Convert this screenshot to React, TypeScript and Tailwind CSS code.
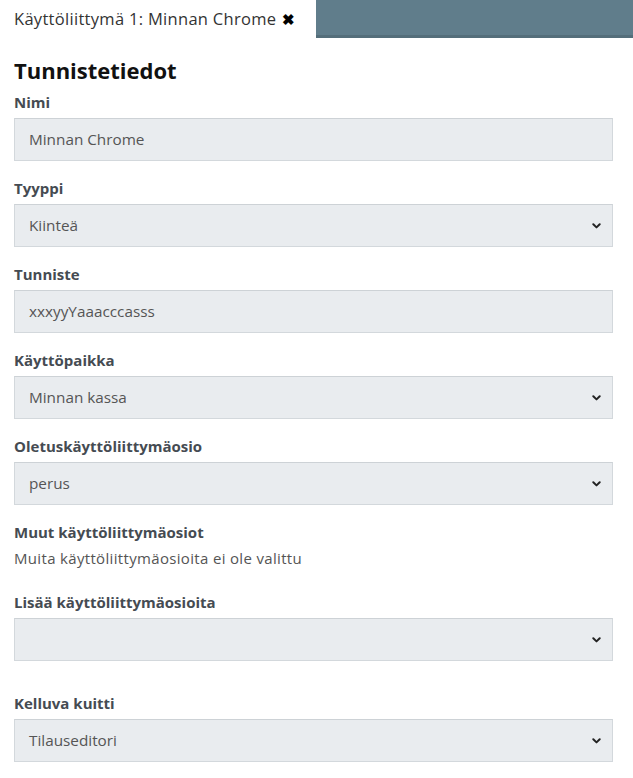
import React from "react";

const font = { fontFamily: "'Open Sans', Lato, sans-serif" };

function Chevron() {
  return (
    <svg width="9" height="6" viewBox="0 0 9 6" className="shrink-0">
      <path d="M1.3 1.3 L4.5 4.4 L7.7 1.3" fill="none" stroke="#222" strokeWidth="2" strokeLinecap="round" strokeLinejoin="round" />
    </svg>
  );
}

function Label({ children }: { children: React.ReactNode }) {
  return <div className="text-[15px] leading-[22px] font-bold text-[#454b52] mb-[5px]">{children}</div>;
}

function Box({ value, select }: { value?: string; select?: boolean }) {
  return (
    <div className="h-[43px] flex items-center justify-between pl-[14px] pr-[11px] bg-[#e9ecef] border border-[#d3d8dc] border-t-[#cdd2d6] text-[15.3px] text-[#555]">
      <span>{value}</span>
      {select && <Chevron />}
    </div>
  );
}

function Field({ label, value, select }: { label: string; value?: string; select?: boolean }) {
  return (
    <div className="mb-[16px]">
      <Label>{label}</Label>
      <Box value={value} select={select} />
    </div>
  );
}

export default function App() {
  return (
    <div className="w-[633px] h-[778px] bg-white overflow-hidden" style={font}>
      <div className="flex h-[38px]">
        <div className="w-[316px] flex items-center pl-[14px] gap-[6px] text-[16.5px] tracking-[0.3px] text-[#333]">
          <span>Käyttöliittymä 1: Minnan Chrome</span>
          <span className="text-[15px] text-black font-bold leading-none">✖</span>
        </div>
        <div className="flex-1 bg-[#607d8b] border-b-[3px] border-[#546e7a]" />
      </div>
      <div className="px-[14px] pr-[20px]">
        <h1 className="text-[22px] font-bold text-[#111] mt-[18px] leading-[28px] mb-[7px]">Tunnistetiedot</h1>
        <Field label="Nimi" value="Minnan Chrome" />
        <Field label="Tyyppi" value="Kiinteä" select />
        <Field label="Tunniste" value="xxxyyYaaacccasss" />
        <Field label="Käyttöpaikka" value="Minnan kassa" select />
        <Field label="Oletuskäyttöliittymäosio" value="perus" select />
        <div className="mb-[22px]">
          <div className="text-[15px] leading-[22px] font-bold text-[#454b52] mb-[4px]">Muut käyttöliittymäosiot</div>
          <div className="text-[15px] leading-[22px] tracking-[0.33px] text-[#555]">Muita käyttöliittymäosioita ei ole valittu</div>
        </div>
        <div className="mb-[31px]">
          <Label>Lisää käyttöliittymäosioita</Label>
          <Box select />
        </div>
        <Field label="Kelluva kuitti" value="Tilauseditori" select />
      </div>
    </div>
  );
}
